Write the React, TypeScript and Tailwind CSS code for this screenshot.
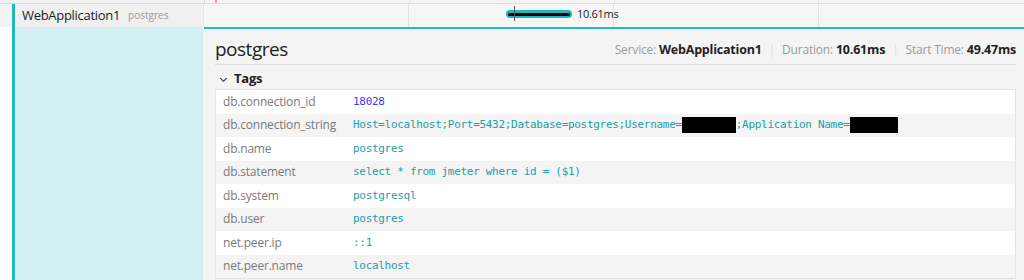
import React from "react";

type Tag = { key: string; value: React.ReactNode; num?: boolean };

const Redacted = ({ w }: { w: number }) => (
  <span className="inline-block h-[16px] bg-black align-middle" style={{ width: w }} />
);

const tags: Tag[] = [
  { key: "db.connection_id", value: "18028", num: true },
  {
    key: "db.connection_string",
    value: (
      <>
        Host=localhost;Port=5432;Database=postgres;Username=
        <Redacted w={54} />
        ;Application Name=
        <Redacted w={48} />
      </>
    ),
  },
  { key: "db.name", value: "postgres" },
  { key: "db.statement", value: "select * from jmeter where id = ($1)" },
  { key: "db.system", value: "postgresql" },
  { key: "db.user", value: "postgres" },
  { key: "net.peer.ip", value: "::1" },
  { key: "net.peer.name", value: "localhost" },
];

const GridLines = () => (
  <div className="absolute inset-0 grid grid-cols-4">
    <div className="border-r border-[#e2e2e2]" />
    <div className="border-r border-[#e2e2e2]" />
    <div className="border-r border-[#e2e2e2]" />
    <div />
  </div>
);

const Sep = () => <span className="mx-[7px] text-[#dddddd]">|</span>;

export default function App() {
  return (
    <div
      className="w-[1024px] h-[280px] overflow-hidden bg-white flex flex-col text-[#333]"
      style={{ fontFamily: '"Open Sans", "Noto Sans", sans-serif' }}
    >
      {/* ruler strip */}
      <div className="flex h-[4px] shrink-0">
        <div className="w-[204px] bg-[#f2f2f2] border-b border-[#dddddd]" />
        <div className="flex-1 relative bg-[#f4f4f4] border-b border-l border-[#dddddd]">
          <GridLines />
          <div className="absolute left-[10px] top-0 w-[2px] h-[3px] bg-[#f29a9a]" />
        </div>
      </div>

      <div className="flex flex-1">
        {/* left span tree */}
        <div className="w-[204px] flex shrink-0">
          <div className="w-[12px] flex flex-col">
            <div className="h-[23px] bg-[#f2f2f2]" />
            <div className="flex-1 bg-white" />
          </div>
          <div className="flex-1 flex flex-col border-l-[3px] border-[#1fb9c2]">
            <div className="h-[23px] bg-[#f0f0f0] flex items-center pl-[7px] gap-[8px] border-r border-[#e4e4e4]">
              <span className="text-[13px] tracking-[-0.3px] text-[#222]">WebApplication1</span>
              <span className="text-[10px] text-[#9a9a9a]">postgres</span>
            </div>
            <div className="flex-1 bg-[#d2f0f2] border-r border-[#e8f6f7]" />
          </div>
        </div>

        {/* right: timeline row + detail */}
        <div className="flex-1 flex flex-col">
          <div className="h-[25px] shrink-0 relative bg-[#f6f6f6] border-b-2 border-[#22bcc5]">
            <GridLines />
            <div className="absolute left-[302px] top-[6px] w-[66px] h-[8px] rounded-full bg-[#1cb6bf] flex items-center px-[2px]">
              <div className="w-full h-[3px] bg-black rounded-full" />
            </div>
            <div className="absolute left-[310px] top-[2px] w-[1px] h-[15px] bg-[#555]" />
            <span className="absolute left-[373px] top-[3px] text-[11px] leading-[14px] tracking-[-0.3px] text-[#222]">
              10.61ms
            </span>
          </div>

          <div className="flex-1 bg-[#f4f4f4] pl-[11px] pr-[8px]">
            <div className="flex items-end justify-between pt-[9px] h-[36px] pb-[3px] border-b border-[#dedede]">
              <h2 className="text-[19px] leading-[24px] tracking-[-0.5px] text-[#222]">postgres</h2>
              <div className="text-[12px] leading-[20px] tracking-[-0.2px] text-[#9a9a9a] mb-[1px]">
                Service: <b className="text-[#222] text-[12.5px]">WebApplication1</b>
                <Sep />
                Duration: <b className="text-[#222] text-[12.5px]">10.61ms</b>
                <Sep />
                Start Time: <b className="text-[#222] text-[12.5px]">49.47ms</b>
              </div>
            </div>

            <div className="h-[24px] pt-[4px] flex items-center gap-[6px] pl-[4px]">
              <svg width="9" height="9" viewBox="0 0 10 10" className="mt-[1px]">
                <path d="M1.5 3.5 L5 7 L8.5 3.5" fill="none" stroke="#333" strokeWidth="1.2" />
              </svg>
              <span className="text-[13px] font-bold tracking-[-0.2px] text-[#222]">Tags</span>
            </div>

            <div className="border border-[#e4e4e4]">
              {tags.map((t, i) => (
                <div
                  key={t.key}
                  className={`flex items-center h-[23.5px] ${i % 2 === 0 ? "bg-white" : "bg-[#f4f4f4]"}`}
                >
                  <div className="w-[137px] shrink-0 pl-[7px] text-[12px] tracking-[-0.2px] text-[#7a7a7a]">
                    {t.key}
                  </div>
                  <div
                    className={`text-[11px] tracking-[-0.3px] whitespace-pre ${t.num ? "text-[#3b3bf0]" : "text-[#1d9ea6]"}`}
                    style={{ fontFamily: '"DejaVu Sans Mono", "Liberation Mono", monospace' }}
                  >
                    {t.value}
                  </div>
                </div>
              ))}
            </div>
          </div>
        </div>
      </div>
    </div>
  );
}
